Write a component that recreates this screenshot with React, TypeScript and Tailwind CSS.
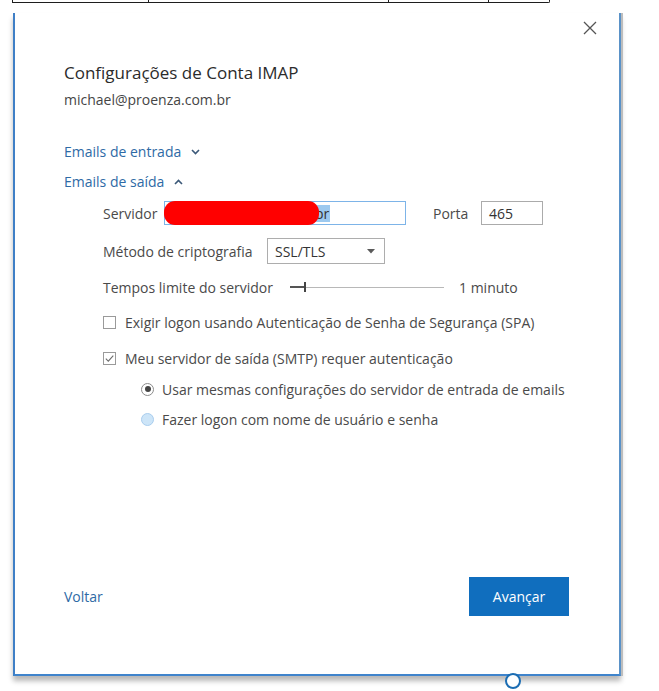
import React from "react";

const F = { fontFamily: '"Open Sans", "Noto Sans", sans-serif' };

function Checkbox({ checked }: { checked?: boolean }) {
  return (
    <span className="flex h-[13px] w-[13px] shrink-0 items-center justify-center border border-[#9a9a9a] bg-white">
      {checked && (
        <svg width="11" height="11" viewBox="0 0 11 11">
          <path d="M1.8 5.6 L4.3 8.1 L9.3 2.6" fill="none" stroke="#6b6b6b" strokeWidth="1.1" />
        </svg>
      )}
    </span>
  );
}

export default function App() {
  return (
    <div className="relative h-[691px] w-[659px] overflow-hidden bg-white text-[#444]" style={F}>
      {/* top table strip */}
      <div className="ml-[12px] flex h-[3px] w-[538px] rounded-br-[2px] border-b-[1.5px] border-l border-r border-[#1e1e1e]">
        <div className="w-[136px] border-r border-[#1e1e1e]" />
        <div className="w-[240px] border-r border-[#1e1e1e]" />
        <div className="w-[100px] border-r border-[#1e1e1e]" />
        <div className="flex-1" />
      </div>

      {/* dialog + right grey edge */}
      <div className="mt-[10px] flex">
        <div className="ml-[13px] flex h-[663px] w-[608px] flex-col border-b-2 border-l-2 border-r-2 border-b-[#3f84cc] border-l-[#3f7fc6] border-r-[#5a92c8] bg-white shadow-[0_5px_5px_rgba(0,0,0,0.28)]">
          {/* close */}
          <div className="flex justify-end pr-[19px] pt-[5px]">
            <button className="flex h-[20px] w-[20px] items-center justify-center">
              <svg width="14" height="14" viewBox="0 0 14 14">
                <path d="M1 1 L13 13 M13 1 L1 13" stroke="#555" strokeWidth="1.3" />
              </svg>
            </button>
          </div>

          <div className="flex flex-1 flex-col pl-[49px]">
            <div className="mt-[23px] text-[17px] leading-[24px] text-[#2b2b2b]">Configurações de Conta IMAP</div>
            <div className="mt-[5px] text-[14px] leading-[20px] text-[#454545]">michael@proenza.com.br</div>

            <div className="mt-[32px] flex items-center text-[14px] leading-[20px] text-[#2e6aa5]">
              <span>Emails de entrada</span>
              <svg className="ml-[10px]" width="9" height="6" viewBox="0 0 9 6">
                <path d="M1 1 L4.5 4.5 L8 1" fill="none" stroke="#3b5878" strokeWidth="1.6" />
              </svg>
            </div>
            <div className="mt-[10px] flex items-center text-[14px] leading-[20px] text-[#2e6aa5]">
              <span>Emails de saída</span>
              <svg className="ml-[10px]" width="9" height="6" viewBox="0 0 9 6">
                <path d="M1 5 L4.5 1.5 L8 5" fill="none" stroke="#3b5878" strokeWidth="1.6" />
              </svg>
            </div>

            <div className="pl-[39px] text-[14px] text-[#4a4a4a]">
              {/* Servidor row */}
              <div className="mt-[9px] flex h-[24px] items-center">
                <span className="w-[61px]">Servidor</span>
                <div className="relative flex h-[24px] w-[242px] items-center border border-[#7db4e8] bg-white">
                  <span className="ml-[149px] bg-[#9cc9ef] px-[1px] leading-[17px] text-[#333]">br</span>
                  <div className="absolute left-[-1px] top-[-1px] h-[24px] w-[155px] rounded-[11px] bg-[#ff0000]" />
                </div>
                <span className="ml-[27px] w-[48px]">Porta</span>
                <div className="flex h-[24px] w-[62px] items-center border border-[#ababab] pl-[7px] text-[#333]">465</div>
              </div>

              {/* Metodo */}
              <div className="mt-[13px] flex h-[26px] items-center">
                <span className="w-[164px]">Método de criptografia</span>
                <div className="flex h-[26px] w-[118px] items-center justify-between border border-[#adadad] pl-[7px] pr-[9px] text-[#333]">
                  <span>SSL/TLS</span>
                  <svg width="8" height="5" viewBox="0 0 8 5">
                    <path d="M0 0 L8 0 L4 4.5 Z" fill="#5a5a5a" />
                  </svg>
                </div>
              </div>

              {/* Tempos */}
              <div className="mt-[13px] flex h-[20px] items-center">
                <span className="w-[187px]">Tempos limite do servidor</span>
                <div className="flex h-[12px] w-[154px] items-center">
                  <div className="h-[2px] w-[14px] bg-[#555]" />
                  <div className="h-[10px] w-[2px] bg-[#444]" />
                  <div className="h-px flex-1 bg-[#b8b8b8]" />
                </div>
                <span className="ml-[15px]">1 minuto</span>
              </div>

              {/* checkboxes */}
              <div className="mt-[15px] flex h-[20px] items-center gap-[9px]">
                <Checkbox />
                <span className="whitespace-nowrap">Exigir logon usando Autenticação de Senha de Segurança (SPA)</span>
              </div>
              <div className="mt-[16px] flex h-[20px] items-center gap-[9px]">
                <Checkbox checked />
                <span>Meu servidor de saída (SMTP) requer autenticação</span>
              </div>

              {/* radios */}
              <div className="pl-[38px]">
                <div className="mt-[11px] flex h-[20px] items-center gap-[8px]">
                  <span className="flex h-[13px] w-[13px] shrink-0 items-center justify-center rounded-full border border-[#8c8c8c] bg-white">
                    <span className="h-[6px] w-[6px] rounded-full bg-[#444]" />
                  </span>
                  <span className="whitespace-nowrap">Usar mesmas configurações do servidor de entrada de emails</span>
                </div>
                <div className="mt-[10px] flex h-[20px] items-center gap-[8px]">
                  <span className="h-[13px] w-[13px] shrink-0 rounded-full border border-[#a9cdee] bg-[#cde5f8]" />
                  <span>Fazer logon com nome de usuário e senha</span>
                </div>
              </div>
            </div>

            {/* footer */}
            <div className="mt-auto mb-[58px] flex items-center justify-between pr-[50px]">
              <span className="text-[14px] text-[#2e6aa5]">Voltar</span>
              <button className="flex h-[39px] w-[100px] items-center justify-center bg-[#106ebe] text-[14px] text-white">
                Avançar
              </button>
            </div>
          </div>
        </div>
        <div className="h-[663px] w-[2px] bg-[#bdbdbd]" />
      </div>

      {/* connector handle overlay */}
      <div className="absolute left-[505px] top-[673px] h-[16px] w-[16px] rounded-full border-[2.5px] border-[#1b6db3] bg-white" />
    </div>
  );
}
